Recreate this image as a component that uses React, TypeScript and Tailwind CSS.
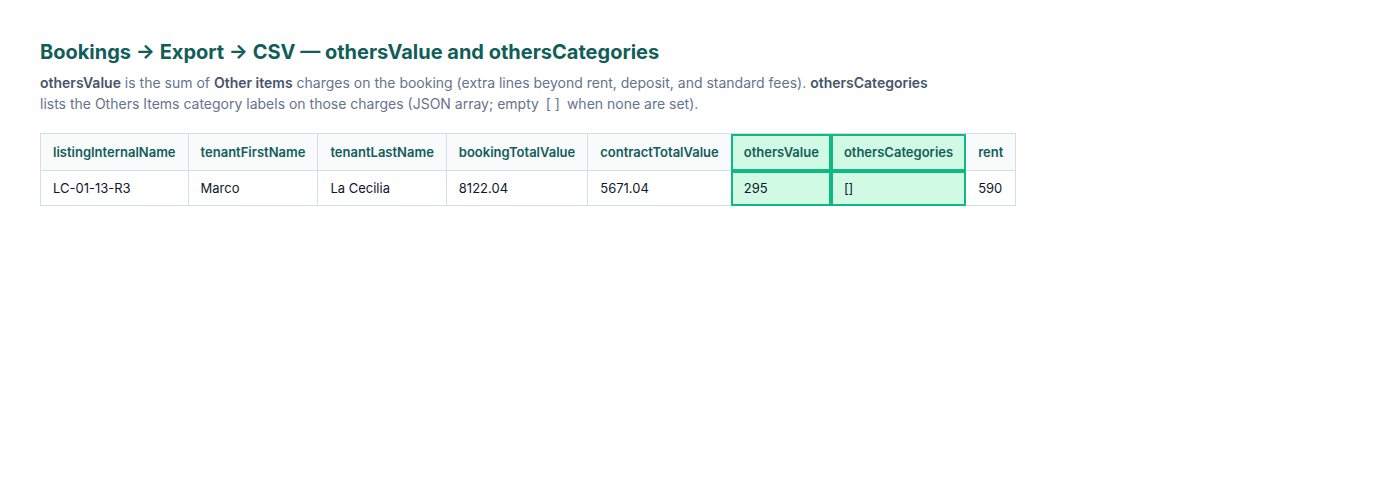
const columns = [
  'listingInternalName',
  'tenantFirstName',
  'tenantLastName',
  'bookingTotalValue',
  'contractTotalValue',
  'othersValue',
  'othersCategories',
  'rent',
];

const row = ['LC-01-13-R3', 'Marco', 'La Cecilia', '8122.04', '5671.04', '295', '[]', '590'];

// columns to call out in the export preview
const highlighted = new Set(['othersValue', 'othersCategories']);

export default function App() {
  return (
    <div className="min-h-screen bg-white px-10 pt-[38px] font-['Inter','Liberation_Sans',sans-serif]">
      <h1 className="text-[20px] leading-7 font-bold text-[#115e59]">
        Bookings → Export → CSV — othersValue and othersCategories
      </h1>
      <p className="mt-[6px] max-w-[896px] text-[14px] leading-[21px] text-[#64748b]">
        <strong className="font-semibold text-[#475569]">othersValue</strong> is the sum of{' '}
        <strong className="font-semibold text-[#475569]">Other items</strong> charges on the booking (extra lines
        beyond rent, deposit, and standard fees).{' '}
        <strong className="font-semibold text-[#475569]">othersCategories</strong> lists the Others Items category
        labels on those charges (JSON array; empty <code className="px-[3px] font-['Inter',sans-serif] text-[14px]">[ ]</code> when none are set).
      </p>

      <table className="mt-[19px] border-collapse text-[13px]">
        <thead>
          <tr>
            {columns.map((c) => (
              <th
                key={c}
                className={
                  highlighted.has(c)
                    ? 'border border-[#d5dde7] bg-[#d1fae5] px-3 py-[10px] text-left font-semibold leading-4 text-[#115e59] outline-2 -outline-offset-2 outline-[#10b981]'
                    : 'border border-[#d5dde7] bg-[#f8fafc] px-3 py-[10px] text-left font-semibold leading-4 text-[#115e59]'
                }
              >
                {c}
              </th>
            ))}
          </tr>
        </thead>
        <tbody>
          <tr>
            {row.map((v, i) => (
              <td
                key={i}
                className={
                  highlighted.has(columns[i])
                    ? 'border border-[#d5dde7] bg-[#d1fae5] px-3 py-[9px] leading-4 text-[#0f172a] outline-2 -outline-offset-2 outline-[#10b981]'
                    : 'border border-[#d5dde7] bg-white px-3 py-[9px] leading-4 text-[#0f172a]'
                }
              >
                {v}
              </td>
            ))}
          </tr>
        </tbody>
      </table>
    </div>
  );
}
